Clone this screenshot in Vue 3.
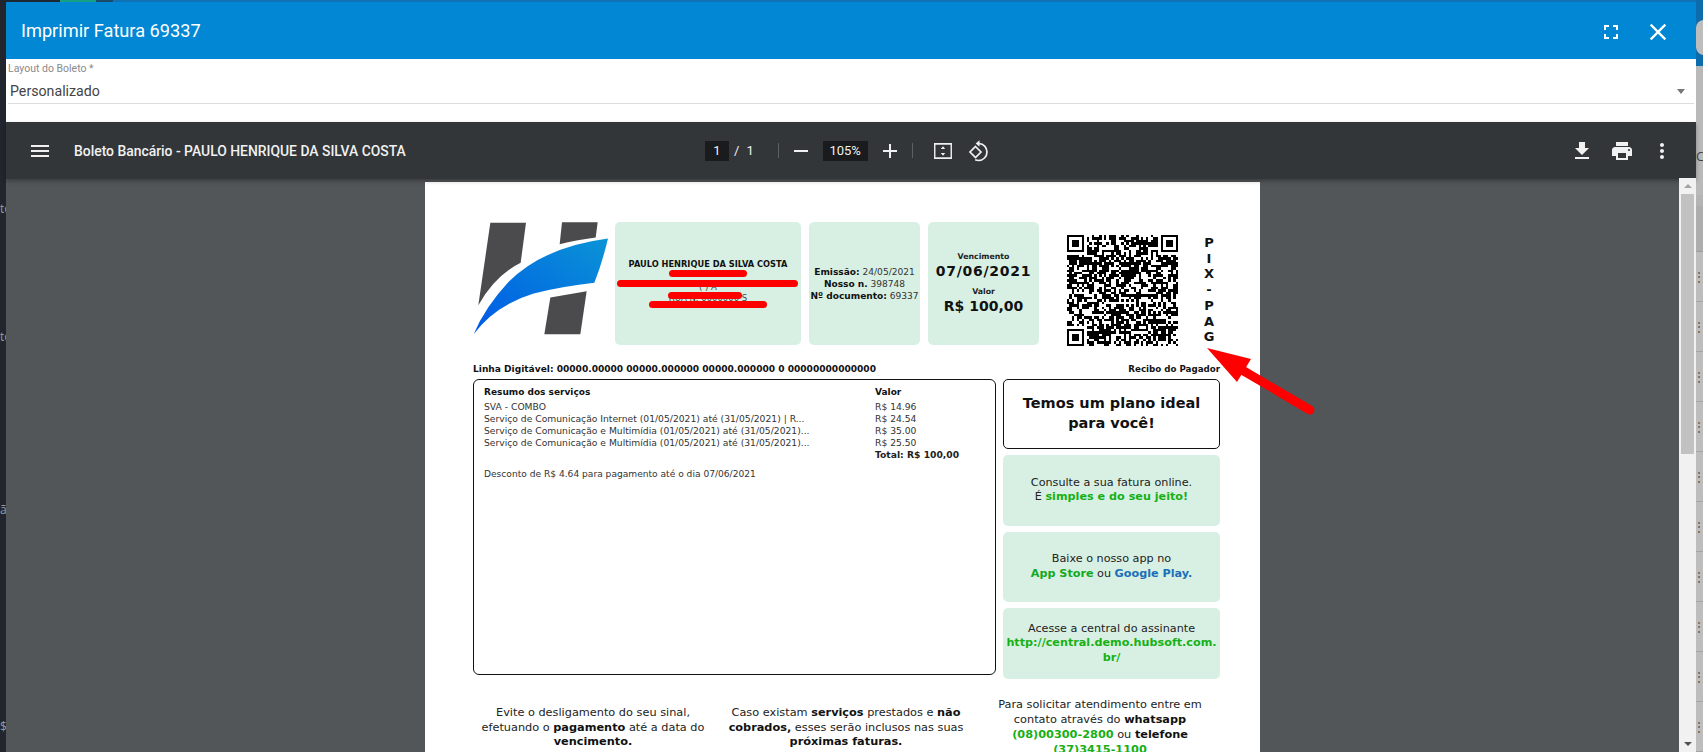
<script setup>
const pix = ['P', 'I', 'X', '-', 'P', 'A', 'G']
const leftBits = ['to', 'to', 'ão', '$']
const rows = Array.from({ length: 10 }, (_, i) => i)
const services = [
  ['SVA - COMBO', 'R$ 14.96'],
  ['Serviço de Comunicação Internet (01/05/2021) até (31/05/2021) | R...', 'R$ 24.54'],
  ['Serviço de Comunicação e Multimídia (01/05/2021) até (31/05/2021)...', 'R$ 35.00'],
  ['Serviço de Comunicação e Multimídia (01/05/2021) até (31/05/2021)...', 'R$ 25.50']
]

const N = 45
function buildQr() {
  let seed = 69337
  const rnd = () => {
    seed = (seed * 1664525 + 1013904223) % 4294967296
    return seed / 4294967296
  }
  const cells = []
  const inFinder = (x, y, fx, fy) => x >= fx - 1 && x <= fx + 7 && y >= fy - 1 && y <= fy + 7
  for (let y = 0; y < N; y++) {
    for (let x = 0; x < N; x++) {
      const reserved = inFinder(x, y, 0, 0) || inFinder(x, y, N - 7, 0) || inFinder(x, y, 0, N - 7)
      if (!reserved && rnd() > 0.42) cells.push(`M${x} ${y}h1v1h-1z`)
    }
  }
  const finder = (fx, fy) =>
    `M${fx} ${fy}h7v7h-7zM${fx + 1} ${fy + 1}v5h5v-5zM${fx + 2} ${fy + 2}h3v3h-3z`
  return cells.join('') + finder(0, 0) + finder(N - 7, 0) + finder(0, N - 7)
}
const qrPath = buildQr()
</script>

<template>
  <div class="screen">
    <aside class="strip-left">
      <span v-for="(bit, i) in leftBits" :key="i" class="strip-bit">{{ bit }}</span>
    </aside>

    <main class="dialog">
      <div class="dialog-edge"></div>
      <header class="dialog-head">
        <h1 class="dialog-title">Imprimir Fatura 69337</h1>
        <div class="head-actions">
          <svg class="head-icon" viewBox="0 0 24 24"><path d="M7 14H5v5h5v-2H7v-3zm-2-4h2V7h3V5H5v5zm12 7h-3v2h5v-5h-2v3zM14 5v2h3v3h2V5h-5z" /></svg>
          <svg class="head-icon close-icon" viewBox="0 0 24 24"><path d="M19 6.41L17.59 5 12 10.59 6.41 5 5 6.41 10.59 12 5 17.59 6.41 19 12 13.41 17.59 19 19 17.59 13.41 12z" /></svg>
        </div>
      </header>

      <section class="field-area">
        <label class="field-label">Layout do Boleto *</label>
        <div class="field-select">
          <span>Personalizado</span>
          <i class="select-caret"></i>
        </div>
      </section>

      <nav class="pdf-bar">
        <div class="bar-left">
          <svg class="bar-icon" viewBox="0 0 24 24"><path d="M3 18h18v-2H3v2zm0-5h18v-2H3v2zm0-7v2h18V6H3z" /></svg>
          <span class="bar-title">Boleto Bancário - PAULO HENRIQUE DA SILVA COSTA</span>
        </div>
        <div class="bar-center">
          <span class="page-box">1</span>
          <span class="page-of">/</span>
          <span class="page-total">1</span>
          <span class="bar-sep sep-a"></span>
          <svg class="bar-icon minus" viewBox="0 0 24 24"><path d="M5 11h14v2H5z" /></svg>
          <span class="zoom-box">105%</span>
          <svg class="bar-icon plus" viewBox="0 0 24 24"><path d="M19 13h-6v6h-2v-6H5v-2h6V5h2v6h6z" /></svg>
          <span class="bar-sep sep-b"></span>
          <svg class="fit-icon" viewBox="0 0 18 16">
            <rect x="0.75" y="0.75" width="16.5" height="14.5" fill="none" stroke="#f1f1f1" stroke-width="1.4" />
            <path d="M0 0h18v1.6H0zM0 14.4h18V16H0zM9 3.2l2.2 2.8H6.800zM9 12.800l-2.200-2.800h4.400z" fill="#f1f1f1" />
          </svg>
          <svg class="rotate-icon" viewBox="0 0 24 24" fill="none" stroke="#f1f1f1" stroke-width="1.700">
            <path d="M8.500 7.500l5.500 5.500-5.500 5.500L3 13z" />
            <path d="M12 4.500c4.500.3 8 4 8 8.500 0 4.700-3.800 8.500-8.500 8.500-1.200 0-2.300-.3-3.300-.7" />
            <path d="M12.500 1.200L8.700 4.500l3.800 3.300z" fill="#f1f1f1" stroke="none" />
          </svg>
        </div>
        <div class="bar-right">
          <svg class="bar-icon" viewBox="0 0 24 24"><path d="M19 9h-4V3H9v6H5l7 7 7-7zM5 18v2h14v-2H5z" /></svg>
          <svg class="bar-icon" viewBox="0 0 24 24"><path d="M19 8H5c-1.660 0-3 1.340-3 3v6h4v4h12v-4h4v-6c0-1.660-1.340-3-3-3zm-3 11H8v-5h8v5zm3-7c-.550 0-1-.450-1-1s.450-1 1-1 1 .450 1 1-.450 1-1 1zm-1-9H6v4h12V3z" /></svg>
          <svg class="bar-icon" viewBox="0 0 24 24"><path d="M12 8c1.100 0 2-.900 2-2s-.900-2-2-2-2 .900-2 2 .900 2 2 2zm0 2c-1.100 0-2 .900-2 2s.900 2 2 2 2-.900 2-2-.900-2-2-2zm0 6c-1.100 0-2 .900-2 2s.900 2 2 2 2-.900 2-2-.900-2-2-2z" /></svg>
        </div>
      </nav>

      <div class="viewer">
        <div class="viewer-pane">
          <article class="sheet">
            <div class="top-row">
              <svg class="logo" viewBox="38 36 408 338">
                <defs>
                  <linearGradient id="swoosh" x1="0" y1="1" x2="1" y2="0">
                    <stop offset="0" stop-color="#0058e6" />
                    <stop offset="1" stop-color="#0a94d6" />
                  </linearGradient>
                </defs>
                <path d="M90 38H197L181 158Q105 195 54 285Z" fill="#4b4a4d" />
                <path d="M305 36H412L406 82Q345 90 298 102Z" fill="#4b4a4d" />
                <path d="M270 262L379 243L360 372H252Z" fill="#4b4a4d" />
                <path d="M443 85Q250 110 145 215Q75 290 40 372Q105 285 220 250Q310 228 402 218Q425 160 443 85Z" fill="url(#swoosh)" />
              </svg>
              <div class="tile tile-name">
                <strong class="payer">PAULO HENRIQUE DA SILVA COSTA</strong>
                <span>&nbsp;</span>
                <span>( ) A</span>
                <span>RUA N. 0000000 S</span>
                <span>&nbsp;</span>
                <i class="scribble s1"></i>
                <i class="scribble s2"></i>
                <i class="scribble s3"></i>
                <i class="scribble s4"></i>
              </div>
              <div class="tile tile-meta">
                <span><b>Emissão:</b> 24/05/2021</span>
                <span><b>Nosso n.</b> 398748</span>
                <span><b>Nº documento:</b> 69337</span>
              </div>
              <div class="tile tile-due">
                <b class="due-label">Vencimento</b>
                <b class="due-value due-date">07/06/2021</b>
                <b class="due-label due-gap">Valor</b>
                <b class="due-value">R$ 100,00</b>
              </div>
              <svg class="qr" :viewBox="`0 0 ${N} ${N}`" shape-rendering="crispEdges"><path :d="qrPath" fill="#000" fill-rule="evenodd" /></svg>
              <div class="pix">
                <span v-for="(ch, i) in pix" :key="i">{{ ch }}</span>
              </div>
            </div>

            <div class="line-row">
              <b>Linha Digitável: 00000.00000 00000.000000 00000.000000 0 00000000000000</b>
              <b class="receipt">Recibo do Pagador</b>
            </div>

            <div class="mid-row">
              <section class="summary">
                <div class="sum-grid sum-head">
                  <b>Resumo dos serviços</b>
                  <b>Valor</b>
                </div>
                <div v-for="(s, i) in services" :key="i" class="sum-grid sum-line">
                  <span>{{ s[0] }}</span>
                  <span>{{ s[1] }}</span>
                </div>
                <div class="sum-grid sum-line">
                  <span></span>
                  <b class="sum-total">Total: R$ 100,00</b>
                </div>
                <p class="discount">Desconto de R$ 4.64 para pagamento até o dia 07/06/2021</p>
              </section>
              <section class="promo">
                <div class="plan">Temos um plano ideal<br />para você!</div>
                <div class="card"><p>Consulte a sua fatura online.<br />É <b class="green">simples e do seu jeito!</b></p></div>
                <div class="card"><p>Baixe o nosso app no<br /><b class="green2">App Store</b> ou <b class="blue">Google Play.</b></p></div>
                <div class="card"><p>Acesse a central do assinante<br /><b class="green">http://central.demo.hubsoft.com.<wbr />br/</b></p></div>
              </section>
            </div>

            <div class="notes">
              <p class="note n1">Evite o desligamento do seu sinal, efetuando o <b>pagamento</b> até a data do <b>vencimento.</b></p>
              <p class="note n2">Caso existam <b>serviços</b> prestados e <b>não cobrados,</b> esses serão inclusos nas suas <b>próximas faturas.</b></p>
              <p class="note n3">Para solicitar atendimento entre em contato através do <b>whatsapp</b> <b class="green">(08)00300-2800</b> ou <b>telefone</b> <b class="green">(37)3415-1100</b></p>
            </div>

            <svg class="arrow" viewBox="0 0 120 80">
              <path d="M7 2L51 13L37 36Z" fill="#fe0000" />
              <path d="M37 21L110 64" fill="none" stroke="#fe0000" stroke-width="9" stroke-linecap="round" />
            </svg>
          </article>
        </div>
        <div class="scrollbar">
          <i class="sb-up"></i>
          <div class="sb-thumb"></div>
          <i class="sb-down"></i>
        </div>
      </div>
    </main>

    <aside class="strip-right">
      <div class="sr-top"><div class="sr-chip"></div></div>
      <div class="sr-head"><span>C</span></div>
      <div class="sr-band"></div>
      <div v-for="r in rows" :key="r" class="sr-row"><span>⋮</span></div>
    </aside>
  </div>
</template>

<style>
html, body { margin: 0; padding: 0; background: #21252e; overflow: hidden; }
</style>

<style scoped>
.screen {
  width: 1703px;
  height: 752px;
  display: flex;
  overflow: hidden;
  font-family: "DejaVu Sans", Verdana, sans-serif;
  color: #111;
}
.strip-left {
  flex: 0 0 6px;
  background: #21252e;
  display: grid;
  grid-template-rows: 216px 128px 173px 217px;
  overflow: hidden;
  color: #9a9da3;
  font: 12px "Open Sans", sans-serif;
}
.strip-bit { align-self: end; line-height: 14px; white-space: nowrap; }

.dialog {
  flex: 0 0 1690px;
  display: flex;
  flex-direction: column;
  min-height: 0;
}
.dialog-edge {
  height: 2px;
  background: linear-gradient(90deg, #1b2733 0 54px, #16a085 54px 90px, #1b4a6a 90px 107px, #0f72b5 107px);
}
.dialog-head {
  height: 57px;
  background: #0187d3;
  display: flex;
  align-items: center;
  justify-content: space-between;
  padding: 0 24px 0 15px;
}
.dialog-title {
  margin: 0;
  font: 400 18.200px Roboto, sans-serif;
  color: #fff;
}
.head-actions { display: flex; align-items: center; gap: 21px; padding-top: 2px; }
.head-icon { width: 24px; height: 24px; fill: #fff; }
.close-icon { width: 28px; height: 28px; }

.field-area {
  height: 63px;
  background: #fff;
  padding: 3px 2px 0;
  box-sizing: border-box;
  font-family: Roboto, sans-serif;
}
.field-label {
  display: block;
  font-size: 10.500px;
  line-height: 13px;
  color: #8a8a8a;
}
.field-select {
  width: 1686px;
  height: 29px;
  padding: 4px 8px 0 2px;
  box-sizing: border-box;
  display: flex;
  align-items: center;
  justify-content: space-between;
  border-bottom: 1px solid #dcdcdc;
  font-size: 14.200px;
  color: #444;
}
.select-caret {
  width: 0;
  height: 0;
  border-left: 4px solid transparent;
  border-right: 4px solid transparent;
  border-top: 5px solid #777;
  margin-right: 1px;
}

.pdf-bar {
  position: relative;
  z-index: 2;
  height: 57px;
  flex: none;
  background: #323639;
  box-shadow: 0 2px 4px rgba(0, 0, 0, 0.3);
  display: flex;
  align-items: center;
  color: #f1f1f1;
  font-family: Roboto, sans-serif;
}
.bar-icon { width: 24px; height: 24px; fill: #f1f1f1; flex: none; }
.bar-left {
  flex: 0 0 699px;
  display: flex;
  align-items: center;
  box-sizing: border-box;
  padding-left: 22px;
  gap: 22px;
}
.bar-title { font-size: 13.900px; font-weight: 500; white-space: nowrap; }
.bar-center { display: flex; align-items: center; font-size: 13px; }
.page-box {
  width: 24px;
  height: 20px;
  background: #191b1c;
  text-align: center;
  line-height: 20px;
}
.page-of { margin-left: 5px; }
.page-total { margin-left: 7px; }
.bar-sep { width: 1px; height: 15px; background: #5c6063; }
.sep-a { margin-left: 24px; }
.minus { margin-left: 10px; }
.zoom-box {
  width: 45px;
  height: 20px;
  margin-left: 10px;
  background: #191b1c;
  text-align: center;
  line-height: 20px;
}
.plus { margin-left: 10px; }
.sep-b { margin-left: 10px; }
.fit-icon { width: 18px; height: 16px; margin-left: 21px; }
.rotate-icon { width: 24px; height: 24px; margin-left: 15px; }
.bar-right {
  margin-left: auto;
  padding-right: 22px;
  display: flex;
  align-items: center;
  gap: 16px;
}

.viewer {
  flex: 1;
  min-height: 0;
  display: flex;
  background: #525659;
}
.viewer-pane {
  flex: 1;
  min-width: 0;
  display: flex;
  justify-content: center;
  padding-top: 3px;
  overflow: hidden;
}
.sheet {
  position: relative;
  width: 835px;
  height: 800px;
  flex: none;
  box-sizing: border-box;
  background: #fff;
  padding: 40px 40px 0 48px;
}
.top-row { display: flex; align-items: flex-start; }
.logo { width: 136px; height: 113px; flex: none; margin: 0 6px 0 0; }
.tile {
  background: #d8f0e3;
  border-radius: 5px;
  height: 123px;
  box-sizing: border-box;
  display: flex;
  flex-direction: column;
  align-items: center;
  justify-content: center;
  text-align: center;
  flex: none;
}
.tile-name {
  position: relative;
  width: 186px;
  margin-right: 8px;
  padding-top: 8px;
  font-size: 8.500px;
  line-height: 11.200px;
  color: #444;
}
.payer { color: #111; font-size: 8.250px; }
.scribble {
  position: absolute;
  height: 7px;
  background: #fe0000;
  border-radius: 4px;
}
.s1 { left: 54px; width: 78px; top: 48px; }
.s2 { left: 2px; width: 181px; top: 58px; }
.s3 { left: 53px; width: 74px; top: 70px; }
.s4 { left: 34px; width: 118px; top: 79px; }
.tile-meta {
  width: 111px;
  margin-right: 8px;
  font-size: 9.050px;
  line-height: 12px;
  color: #333;
}
.tile-meta b { color: #111; }
.tile-meta span { white-space: nowrap; }
.tile-due { width: 111px; padding-bottom: 1px; }
.due-label { font-size: 7.800px; line-height: 11px; color: #222; }
.due-value { font-size: 14px; line-height: 18px; color: #111; white-space: nowrap; }
.due-date { letter-spacing: 0.750px; }
.due-gap { margin-top: 6px; }
.qr { width: 111px; height: 111px; flex: none; margin: 13px 0 0 28px; }
.pix {
  width: 14px;
  margin: 13px 0 0 24px;
  display: flex;
  flex-direction: column;
  align-items: center;
  font-size: 13px;
  font-weight: 700;
  line-height: 15.700px;
  color: #111;
}
.line-row {
  display: flex;
  justify-content: space-between;
  margin-top: 18px;
  font-size: 9.070px;
  line-height: 11px;
  height: 12px;
  color: #111;
}
.receipt { font-size: 8.700px; }
.mid-row { display: flex; gap: 7px; margin-top: 3px; }
.summary {
  width: 523px;
  height: 296px;
  box-sizing: border-box;
  border: 1.500px solid #111;
  border-radius: 6px;
  padding: 6px 0 0 10px;
  font-size: 9.200px;
  line-height: 12px;
  color: #333;
  flex: none;
}
.sum-grid { display: grid; grid-template-columns: 391px 1fr; white-space: nowrap; }
.sum-head { color: #111; margin-bottom: 3px; font-size: 9px; }
.sum-total { color: #222; font-size: 9.200px; }
.discount { margin: 7px 0 0; font-size: 9.100px; }
.promo { width: 217px; display: flex; flex-direction: column; gap: 6px; flex: none; }
.plan {
  height: 70px;
  box-sizing: border-box;
  border: 1.500px solid #111;
  border-radius: 5px;
  padding-bottom: 2px;
  display: flex;
  align-items: center;
  justify-content: center;
  text-align: center;
  font-size: 14.500px;
  font-weight: 700;
  line-height: 20px;
  color: #111;
}
.card {
  height: 70.500px;
  box-sizing: border-box;
  background: #d8f0e3;
  border-radius: 5px;
  display: flex;
  align-items: center;
  justify-content: center;
  text-align: center;
  font-size: 11.200px;
  line-height: 14.500px;
  color: #222;
}
.card p { margin: 0; width: 100%; }
.green { color: #16b016; }
.green2 { color: #14a81f; }
.blue { color: #1a6fb8; }
.notes {
  display: flex;
  align-items: center;
  height: 70px;
  margin-top: 14.500px;
  margin-left: 2px;
  font-size: 11.300px;
  line-height: 14.800px;
  color: #222;
  text-align: center;
}
.note { margin: 0; flex: none; }
.n1 { width: 236px; }
.n2 { width: 236px; margin-left: 17px; }
.n3 { width: 226px; margin-left: 23px; }
.note b { color: #111; }
.note b.green { color: #16b016; }
.arrow {
  position: absolute;
  left: 775px;
  top: 164px;
  width: 120px;
  height: 80px;
  overflow: visible;
}

.scrollbar {
  flex: 0 0 17px;
  background: #f1f1f1;
  display: flex;
  flex-direction: column;
  align-items: center;
  position: relative;
  z-index: 3;
  margin-top: -1px;
}
.sb-up {
  width: 0;
  height: 0;
  margin-top: 6px;
  border-left: 4px solid transparent;
  border-right: 4px solid transparent;
  border-bottom: 4px solid #a3a3a3;
}
.sb-thumb { width: 13px; height: 260px; margin-top: 6px; background: #c1c1c1; }
.sb-down {
  width: 0;
  height: 0;
  margin-top: auto;
  margin-bottom: 6px;
  border-left: 4px solid transparent;
  border-right: 4px solid transparent;
  border-top: 4px solid #505050;
}

.strip-right {
  flex: 0 0 7px;
  display: flex;
  flex-direction: column;
  overflow: hidden;
  background: #b9b9b9;
  color: #444;
  font: 13px "Open Sans", sans-serif;
}
.sr-top { height: 66px; box-sizing: border-box; padding-top: 20px; background: #0d6cab; flex: none; }
.sr-chip { height: 35px; width: 12px; background: #bdbdbd; border-radius: 8px 0 0 8px; }
.sr-head { height: 140px; flex: none; display: flex; flex-direction: column; box-sizing: border-box; padding-top: 80px; background: linear-gradient(#b9b9b9 0 92%, #b4b4b4 92%); line-height: 20px; }
.sr-band { height: 46px; flex: none; background: #adadad; border-bottom: 1px solid #9c9c9c; box-sizing: border-box; }
.sr-row {
  height: 50px;
  flex: none;
  box-sizing: border-box;
  border-bottom: 1px solid #a4a4a4;
  background: #bdbdbd;
  font-size: 12px;
  line-height: 50px;
  font-weight: 400;
  color: #555;
  margin-left: -3px;
}
</style>
